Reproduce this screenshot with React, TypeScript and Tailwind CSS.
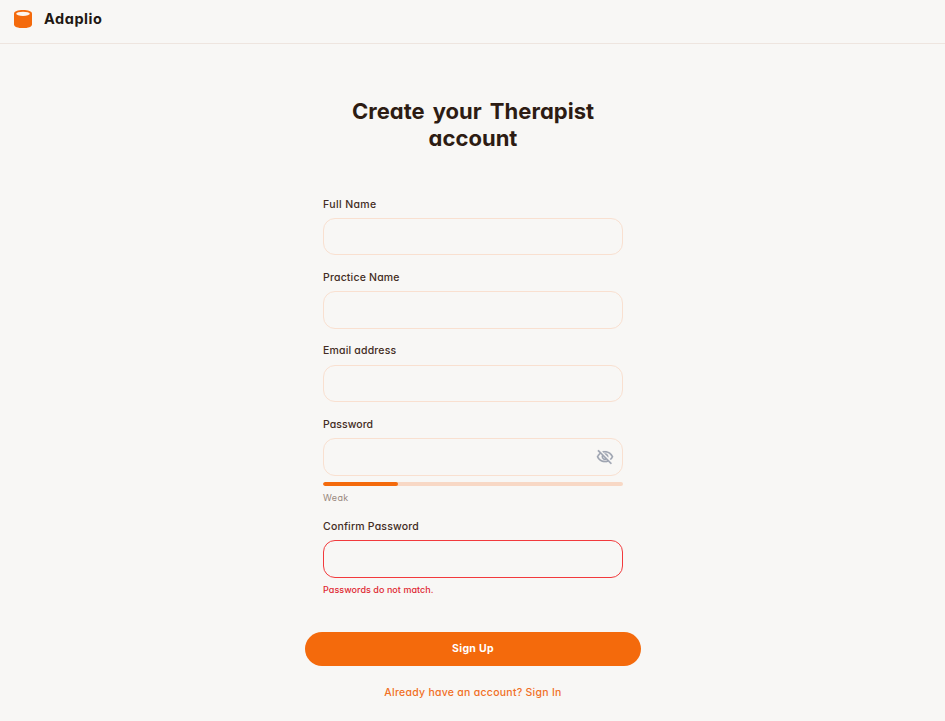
import React from "react";

function EyeOff() {
  return (
    <svg
      viewBox="0 0 24 24"
      fill="currentColor"
      stroke="currentColor"
      strokeWidth="0.25"
      className="size-[18px] text-[#9fa5b1]"
      aria-hidden="true"
    >
      <path d="M12 6c3.79 0 7.17 2.13 8.82 5.5-.59 1.22-1.42 2.27-2.41 3.12l1.41 1.41c1.39-1.23 2.49-2.77 3.18-4.53C21.27 7.11 17 4 12 4c-1.27 0-2.49.2-3.64.57l1.65 1.65C10.66 6.09 11.32 6 12 6zm-1.07 1.14L13 9.21c.57.25 1.03.71 1.28 1.28l2.07 2.07c.08-.34.14-.7.14-1.07C16.5 9.01 14.48 7 12 7c-.37 0-.72.05-1.07.14zM2.01 3.87l2.68 2.68A11.738 11.738 0 0 0 1 11.5C2.73 15.89 7 19 12 19c1.52 0 2.98-.29 4.32-.82l3.42 3.42 1.41-1.41L3.42 2.45 2.01 3.87zm7.5 7.5 2.61 2.61c-.04.01-.08.02-.12.02-1.38 0-2.5-1.12-2.5-2.5 0-.05.01-.08.01-.13zm-3.4-3.4 1.75 1.75a4.6 4.6 0 0 0-.36 1.78 4.507 4.507 0 0 0 6.27 4.14l.98.98c-.88.24-1.8.38-2.75.38-3.79 0-7.17-2.13-8.82-5.5.7-1.43 1.72-2.61 2.93-3.53z" />
    </svg>
  );
}

function Field({
  label,
  tracking,
  error = false,
  icon,
}: {
  label: string;
  tracking: string;
  error?: boolean;
  icon?: React.ReactNode;
}) {
  return (
    <label className="block">
      <span className={`block h-[15px] text-[10.5px] leading-[15.6px] font-[550] text-[#432c23] ${tracking}`}>
        {label}
      </span>
      <span
        className={`mt-[6.4px] flex h-[37.5px] items-center rounded-[12px] border pr-2 ${
          error ? "border-[#f23a3c]" : "border-[#f9e0d0]"
        }`}
      >
        <input className="h-full min-w-0 flex-1 bg-transparent px-3 text-xs outline-none" />
        {icon}
      </span>
    </label>
  );
}

export default function App() {
  return (
    <div className="h-[721px] overflow-hidden bg-[#f8f7f5] font-['Inter',sans-serif] [font-feature-settings:'cv11']">
      <header className="flex h-[44px] items-center border-b border-[#eee5df] pb-[5px] pl-[14px]">
        <svg width="18" height="18" viewBox="0 0 18 18" aria-hidden="true">
          <path d="M0 3.6C0 1.2 4 0 9 0s9 1.2 9 3.6v10.8c0 2.4-4 3.6-9 3.6s-9-1.2-9-3.6z" fill="#f46a0c" />
          <ellipse cx="9" cy="3.8" rx="6.8" ry="2.1" fill="#fdf5ef" />
        </svg>
        <span className="ml-3 text-[14.5px] leading-5 font-bold tracking-[0.55px] text-[#211712]">Adaplio</span>
      </header>
      <main className="mx-auto flex w-[336px] flex-col items-center pl-px">
        <h1 className="mt-[54px] text-center text-[22px] leading-[27px] font-bold tracking-[0.03px] [word-spacing:2.8px] text-[#2d1c13]">
          Create your Therapist
          <br />
          account
        </h1>
        <form className="mt-[44.5px] flex w-[300px] flex-col gap-[14.6px]">
          <Field label="Full Name" tracking="tracking-[0.38px]" />
          <Field label="Practice Name" tracking="tracking-[0.18px]" />
          <Field label="Email address" tracking="tracking-[0.18px]" />
          <div>
            <Field label="Password" tracking="tracking-[0.05px]" icon={<EyeOff />} />
            <div className="mt-[6px] h-[4.5px] overflow-hidden rounded-full bg-[#f8d8c5]">
              <div className="h-full w-1/4 rounded-full bg-[#f46a0c]" />
            </div>
            <p className="mt-[5px] h-[13px] text-[9px] leading-[14px] tracking-[0.4px] text-[#98877d]">Weak</p>
          </div>
          <div>
            <Field label="Confirm Password" tracking="tracking-[0.18px]" error />
            <p className="mt-[5px] h-[13px] text-[9px] leading-[14px] font-medium tracking-[0.05px] text-[#df2832]">
              Passwords do not match.
            </p>
          </div>
        </form>
        <button className="mt-[36.1px] h-[34.5px] w-[336px] shrink-0 rounded-full bg-[#f46a0c] text-[10.5px] font-bold tracking-[0.3px] text-white">
          Sign Up
        </button>
        <a className="mt-[18.5px] text-[10.5px] leading-[15px] font-[550] tracking-[0.26px] whitespace-nowrap text-[#f17025]">
          Already have an account? Sign In
        </a>
      </main>
    </div>
  );
}
